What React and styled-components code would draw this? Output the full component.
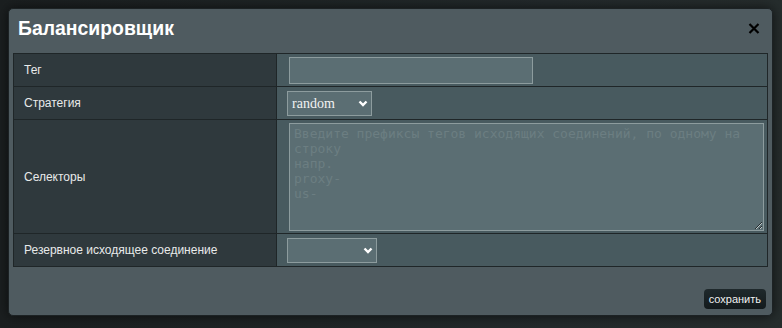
import React from "react";
import styled, { createGlobalStyle } from "styled-components";

const GlobalStyle = createGlobalStyle`
  html, body {
    margin: 0;
    padding: 0;
    height: 100%;
  }
  body {
    background: linear-gradient(90deg, #1b1f20 0%, #1f2526 40%, #232a2c 70%, #262d2d 100%);
    font-family: "Liberation Sans", Arial, sans-serif;
  }
`;

const Page = styled.div`
  padding: 8px;
`;

const Modal = styled.div`
  width: 765px;
  height: 308px;
  box-sizing: border-box;
  background: #4f5b60;
  border: 1px solid #1c2224;
  border-radius: 5px;
  box-shadow: 0 0 12px rgba(0, 0, 0, 0.6);
  padding: 0 4px 6px;
  display: flex;
  flex-direction: column;
`;

const Header = styled.div`
  height: 44px;
  display: flex;
  justify-content: space-between;
  align-items: flex-start;
  padding: 7px 8px 0 5px;
  box-sizing: border-box;
`;

const Title = styled.h3`
  margin: 0;
  font-size: 19.4px;
  line-height: 24px;
  font-weight: bold;
  color: #ffffff;
`;

const Close = styled.button`
  margin-top: 7px;
  padding: 0;
  border: 0;
  background: none;
  width: 12px;
  height: 11px;
  cursor: pointer;
  display: flex;
`;

const Table = styled.table`
  width: 100%;
  border-collapse: collapse;
  border: 1px solid #1f2628;
`;

const Row = styled.tr`
  height: ${({ tall }) => (tall ? "114px" : "33px")};
`;

const Label = styled.td`
  width: 252px;
  padding: 0 0 0 10px;
  background: #2f393d;
  color: #e8eaea;
  font-size: 12px;
  border: 1px solid #1f2628;
  vertical-align: middle;
`;

const Cell = styled.td`
  background: #485a5f;
  border: 1px solid #1f2628;
  padding: 0 0 0 ${({ pad }) => pad || 10}px;
  vertical-align: middle;
`;

const TextInput = styled.input`
  display: block;
  width: 244px;
  height: 27px;
  box-sizing: border-box;
  background: #5b6e73;
  border: 1px solid #8d9c9e;
  color: #fff;
  outline: none;
  margin-left: 2px;
`;

const SelectWrap = styled.div`
  position: relative;
  width: ${({ w }) => w}px;
  height: 25px;
`;

const Select = styled.select`
  appearance: none;
  width: 100%;
  height: 100%;
  box-sizing: border-box;
  background: #5b6e73;
  border: 1px solid #8d9c9e;
  color: #f2f2f2;
  font-family: "Liberation Serif", "Times New Roman", serif;
  font-size: 14px;
  padding: 0 0 0 4px;
  outline: none;
`;

const Chevron = styled.svg`
  position: absolute;
  right: 4px;
  top: 9px;
  pointer-events: none;
`;

const TextArea = styled.textarea`
  display: block;
  width: 475px;
  height: 108px;
  box-sizing: border-box;
  margin-left: 2px;
  background: #5b6e73;
  border: 1px solid #8d9c9e;
  color: #fff;
  font-family: "DejaVu Sans Mono", "Liberation Mono", monospace;
  font-size: 13px;
  line-height: 15px;
  padding: 2px 4px;
  outline: none;
  &::placeholder {
    color: #6c7e82;
  }
`;

const Footer = styled.div`
  margin-top: auto;
  display: flex;
  justify-content: flex-end;
  padding-right: 2px;
`;

const SaveButton = styled.button`
  height: 20px;
  padding: 0 5px;
  border: 0;
  border-radius: 4px;
  background: linear-gradient(180deg, #1f292c 0%, #131a1c 100%);
  color: #f0f0f0;
  font-family: "Liberation Sans", Arial, sans-serif;
  font-size: 11px;
  cursor: pointer;
`;

const Dropdown = ({ w, value }) => (
  <SelectWrap w={w}>
    <Select defaultValue={value}>
      <option value={value}>{value}</option>
    </Select>
    <Chevron width="10" height="7" viewBox="0 0 10 7">
      <path d="M1.5 1.5 L5 5 L8.5 1.5" fill="none" stroke="#ffffff" strokeWidth="2.4" />
    </Chevron>
  </SelectWrap>
);

const placeholder =
  "Введите префиксы тегов исходящих соединений, по одному на строку\nнапр.\nproxy-\nus-";

export default function App() {
  return (
    <Page>
      <GlobalStyle />
      <Modal>
        <Header>
          <Title>Балансировщик</Title>
          <Close aria-label="close">
            <svg width="12" height="11" viewBox="0 0 12 11">
              <path d="M1.5 1 L10.5 10 M10.5 1 L1.5 10" stroke="#000" strokeWidth="2.2" />
            </svg>
          </Close>
        </Header>
        <Table>
          <tbody>
            <Row>
              <Label>Тег</Label>
              <Cell pad={10}>
                <TextInput type="text" />
              </Cell>
            </Row>
            <Row>
              <Label>Стратегия</Label>
              <Cell pad={10}>
                <Dropdown w={85} value="random" />
              </Cell>
            </Row>
            <Row tall>
              <Label>Селекторы</Label>
              <Cell pad={10}>
                <TextArea placeholder={placeholder} />
              </Cell>
            </Row>
            <Row>
              <Label>Резервное исходящее соединение</Label>
              <Cell pad={10}>
                <Dropdown w={90} value="" />
              </Cell>
            </Row>
          </tbody>
        </Table>
        <Footer>
          <SaveButton>сохранить</SaveButton>
        </Footer>
      </Modal>
    </Page>
  );
}
